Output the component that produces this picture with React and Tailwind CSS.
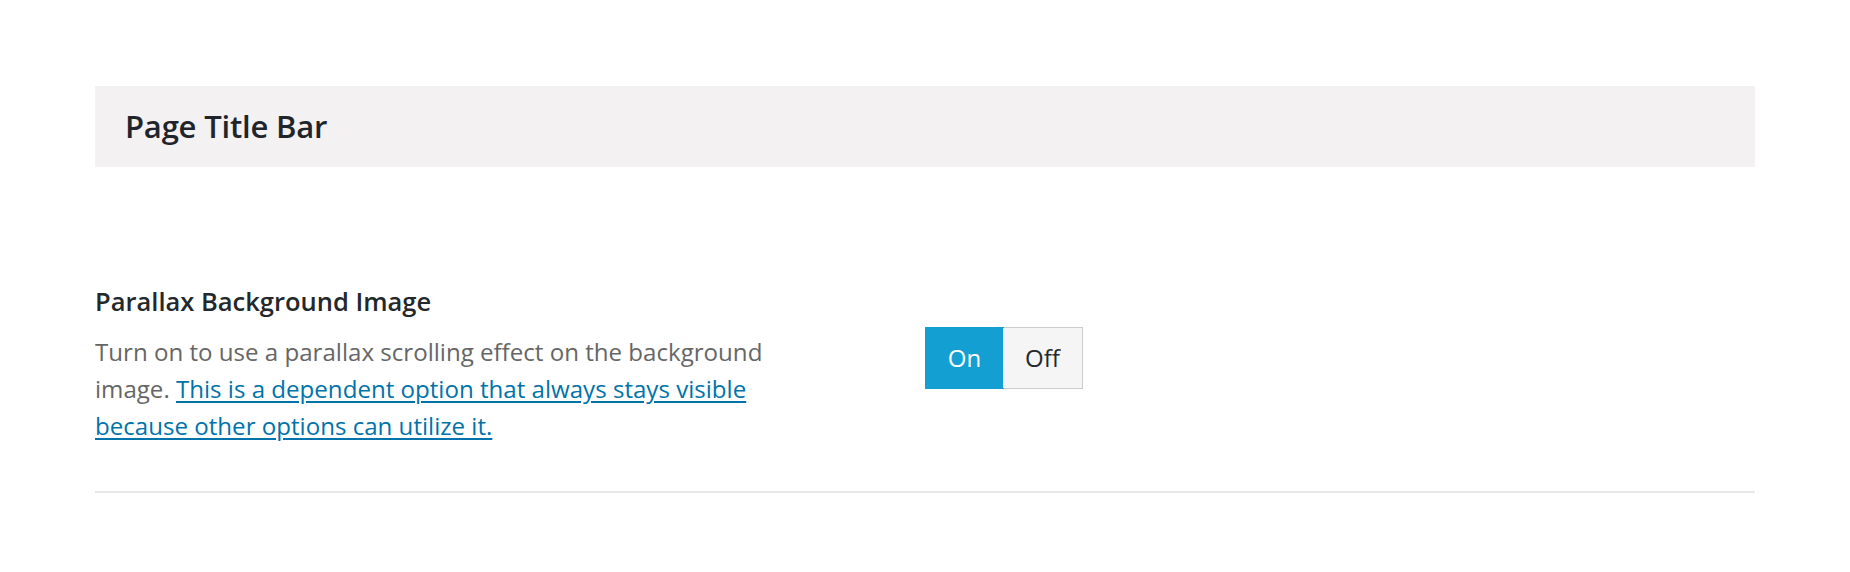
import React, { useState } from 'react';

const App = () => {
  const [parallax, setParallax] = useState(true);

  return (
    <div className="min-h-screen bg-white px-[95px] pt-[86px] font-['Open_Sans',sans-serif]">
      {/* section header */}
      <div className="h-[81px] bg-[#f3f1f1] flex items-center px-[30px]">
        <h2 className="text-[31px] font-semibold text-[#1f252b] tracking-[-0.2px]">Page Title Bar</h2>
      </div>

      {/* option row */}
      <div className="flex pt-[118px] pb-[47px] border-b-2 border-[#e8e8e8]">
        <div className="w-1/2">
          <h3 className="text-[25.5px] leading-[32px] font-semibold text-[#23282d] mb-[16px]">Parallax Background Image</h3>
          <p className="text-[24.1px] leading-[37px] text-[#666] whitespace-nowrap">
            Turn on to use a parallax scrolling effect on the background<br />
            image.{' '}
            <a href="#" className="text-[#0073aa] underline underline-offset-[3px]">
              This is a dependent option that always stays visible<br />
              because other options can utilize it.
            </a>
          </p>
        </div>
        <div className="w-1/2 pt-[42px]">
          <div className="inline-flex h-[62px] border border-[#ccc]">
            <button
              onClick={() => setParallax(true)}
              className={`w-[79px] text-[24px] ${parallax ? 'bg-[#149fd2] text-white border border-[#149fd2] -m-px' : 'bg-[#f5f5f5] text-[#23282d]'}`}
            >
              On
            </button>
            <button
              onClick={() => setParallax(false)}
              className={`w-[79px] text-[24px] ${!parallax ? 'bg-[#149fd2] text-white' : 'bg-[#f5f5f5] text-[#23282d]'}`}
            >
              Off
            </button>
          </div>
        </div>
      </div>
    </div>
  );
};

export default App;
